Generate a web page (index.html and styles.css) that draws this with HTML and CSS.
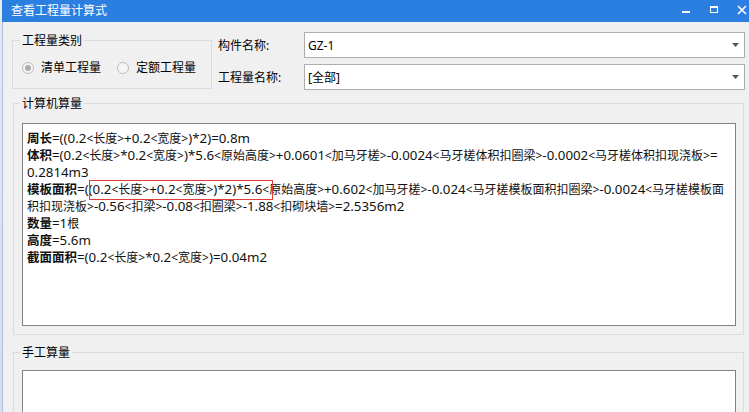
FILE: index.html
```html
<!DOCTYPE html>
<html lang="zh-CN">
<head>
<meta charset="utf-8">
<title>查看工程量计算式</title>
<link rel="stylesheet" href="styles.css">
</head>
<body>
<div class="screen">
  <div class="backdrop"></div>
  <div class="dialog">
    <div class="titlebar">
      <span class="title">查看工程量计算式</span>
      <div class="controls">
        <span class="ctl"><svg width="10" height="10" viewBox="0 0 10 10"><rect x="1" y="6" width="8" height="2" fill="#fff"/></svg></span>
        <span class="ctl"><svg width="10" height="10" viewBox="0 0 10 10"><rect x="1.5" y="1.5" width="7" height="6" fill="none" stroke="#fff" stroke-width="1"/><rect x="1" y="1" width="8" height="2" fill="#fff"/></svg></span>
        <span class="ctl"><svg width="10" height="10" viewBox="0 0 10 10"><path d="M1 1 L9 9 M9 1 L1 9" stroke="#fff" stroke-width="1.6"/></svg></span>
      </div>
    </div>
    <div class="content">
      <div class="toprow">
        <fieldset class="group type">
          <legend>工程量类别</legend>
          <div class="radios">
            <label class="radio"><span class="circle checked"></span>清单工程量</label>
            <label class="radio"><span class="circle"></span>定额工程量</label>
          </div>
        </fieldset>
        <div class="form">
          <div class="field">
            <span class="lbl">构件名称:</span>
            <div class="combo"><span class="val">GZ-1</span><svg class="arrow" width="7" height="4" viewBox="0 0 7 4"><path d="M0 0 H7 L3.5 4 Z" fill="#555"/></svg></div>
          </div>
          <div class="field">
            <span class="lbl">工程量名称:</span>
            <div class="combo"><span class="val">[全部]</span><svg class="arrow" width="7" height="4" viewBox="0 0 7 4"><path d="M0 0 H7 L3.5 4 Z" fill="#555"/></svg></div>
          </div>
        </div>
      </div>
      <fieldset class="group calc">
        <legend>计算机算量</legend>
        <div class="textbox calcbox">
          <div class="line"><b>周长</b>=((0.2<span class="c">&lt;长度&gt;</span>+0.2<span class="c">&lt;宽度&gt;</span>)*2)=0.8m</div>
          <div class="line"><b>体积</b>=(0.2<span class="c">&lt;长度&gt;</span>*0.2<span class="c">&lt;宽度&gt;</span>)*5.6<span class="c">&lt;原始高度&gt;</span>+0.0601<span class="c">&lt;加马牙槎&gt;</span>-0.0024<span class="c">&lt;马牙槎体积扣圈梁&gt;</span>-0.0002<span class="c">&lt;马牙槎体积扣现浇板&gt;</span>=</div>
          <div class="line">0.2814m3</div>
          <div class="line"><b>模板面积</b>=<span class="hl">((0.2<span class="c">&lt;长度&gt;</span>+0.2<span class="c">&lt;宽度&gt;</span>)*2)*5.6<span class="c">&lt;</span></span><span class="c">原始高度&gt;</span>+0.602<span class="c">&lt;加马牙槎&gt;</span>-0.024<span class="c">&lt;马牙槎模板面积扣圈梁&gt;</span>-0.0024<span class="c">&lt;马牙槎模板面</span></div>
          <div class="line"><span class="c">积扣现浇板&gt;</span>-0.56<span class="c">&lt;扣梁&gt;</span>-0.08<span class="c">&lt;扣圈梁&gt;</span>-1.88<span class="c">&lt;扣砌块墙&gt;</span>=2.5356m2</div>
          <div class="line"><b>数量</b>=1<span class="c">根</span></div>
          <div class="line"><b>高度</b>=5.6m</div>
          <div class="line"><b>截面面积</b>=(0.2<span class="c">&lt;长度&gt;</span>*0.2<span class="c">&lt;宽度&gt;</span>)=0.04m2</div>
        </div>
      </fieldset>
      <fieldset class="group manual">
        <legend>手工算量</legend>
        <div class="textbox manualbox"></div>
      </fieldset>
    </div>
  </div>
</div>
</body>
</html>
```

FILE: styles.css
```css
* { box-sizing: border-box; }
html, body {
  margin: 0;
  padding: 0;
  width: 749px;
  height: 412px;
  overflow: hidden;
  background: #f4f4f4;
}
body {
  font-family: "Noto Sans", "Noto Sans CJK SC", sans-serif;
  font-size: 12px;
  color: #000;
}
.screen {
  display: flex;
  height: 412px;
}
.backdrop {
  width: 2px;
  flex: none;
  background: linear-gradient(#e9e9e9, #d8dde6);
}
.dialog {
  width: 760px;
  flex: none;
  display: flex;
  flex-direction: column;
  height: 412px;
}
.titlebar {
  height: 22px;
  flex: none;
  background: #2b7fe1;
  color: #fff;
  display: flex;
  align-items: center;
  padding-left: 9px;
  line-height: 22px;
}
.title {
  font-size: 12px;
}
.controls {
  margin-left: auto;
  display: flex;
  padding-right: 6px;
  height: 22px;
}
.ctl {
  width: 28px;
  height: 22px;
  display: flex;
  align-items: flex-start;
  justify-content: center;
  padding-top: 5px;
}
.content {
  flex: 1;
  background: #f0f0f0;
  border-left: 1px solid #a9c0e4;
  padding: 10px 17px 0 9px;
}
.toprow {
  display: flex;
  align-items: flex-start;
}
.group {
  margin: 0;
  border: 1px solid #dcdcdc;
  min-width: 0;
}
.group legend {
  padding: 0 2px;
  margin-left: -2px;
  line-height: 17px;
  font-size: 12px;
}
.type {
  width: 200px;
  flex: none;
  padding: 12px 0 14px 9px;
}
.radios {
  display: flex;
  height: 13px;
  align-items: center;
  white-space: nowrap;
}
.radio {
  display: flex;
  align-items: center;
  line-height: 13px;
  margin-right: 16px;
  flex: none;
}
.circle {
  width: 12px;
  height: 12px;
  flex: none;
  border: 1px solid #bdbdbd;
  border-radius: 50%;
  background: #f5f5f5;
  margin-right: 7px;
  display: flex;
  align-items: center;
  justify-content: center;
}
.circle.checked::before {
  content: "";
  width: 6px;
  height: 6px;
  border-radius: 50%;
  background: #ababab;
}
.form {
  flex: 1;
  margin-left: 6px;
  display: flex;
  flex-direction: column;
  gap: 6px;
}
.field {
  display: flex;
  align-items: center;
  height: 26px;
}
.lbl {
  width: 86px;
  flex: none;
}
.combo {
  flex: 1;
  height: 26px;
  background: #fff;
  border: 1px solid #adadad;
  display: flex;
  align-items: center;
  padding: 0 5px 0 3px;
}
.val {
  flex: 1;
  font-size: 12px;
}
.arrow {
  flex: none;
}
.calc {
  margin: 5px 1px 0 1px;
  padding: 11px 7px 8px 8px;
}
.manual {
  margin: 9px 1px 0 1px;
  padding: 9px 7px 0 8px;
}
.textbox {
  background: #fff;
  border: 1px solid #828282;
}
.calcbox {
  height: 203px;
  padding: 6px 4px 0;
  font-size: 13.3px;
  line-height: 17px;
  color: #111;
  overflow: hidden;
}
.manualbox {
  height: 60px;
}
.line {
  white-space: nowrap;
  line-height: 17px;
}
.line b {
  font-weight: bold;
  font-size: 12.5px;
}
.c {
  font-size: 12px;
}
.hl {
  position: relative;
}
.hl::after {
  content: "";
  position: absolute;
  left: 4px;
  right: -4px;
  top: 0px;
  bottom: -2px;
  border: 1px solid #e23b3b;
  pointer-events: none;
}
```
